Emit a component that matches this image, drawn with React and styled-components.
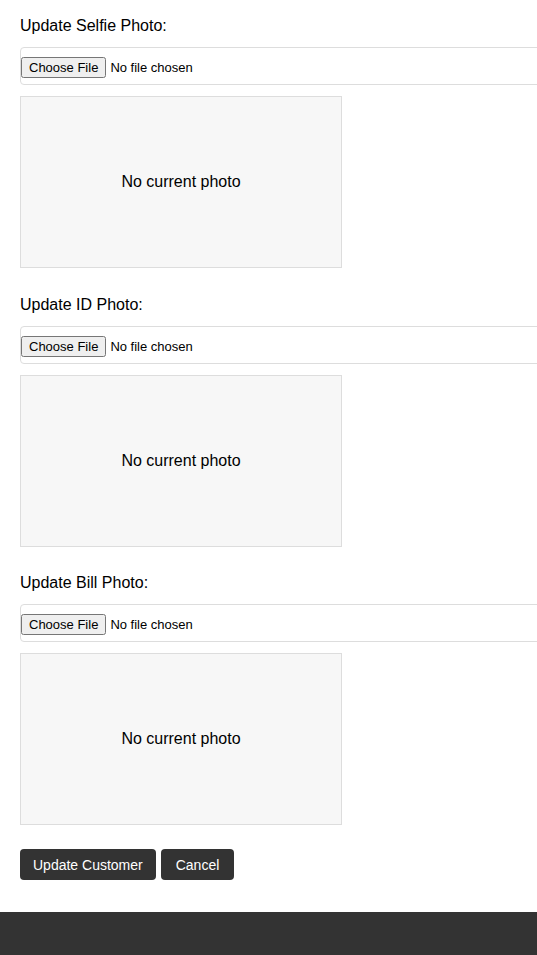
import React from 'react';
import styled, { createGlobalStyle } from 'styled-components';

const GlobalStyle = createGlobalStyle`
  html, body {
    margin: 0;
    padding: 0;
    background: #fff;
    overflow-x: hidden;
  }
  body {
    font-family: "Liberation Sans", Arial, sans-serif;
    color: #000;
  }
`;

const Page = styled.div`
  display: flex;
  flex-direction: column;
  min-height: 955px;
`;

const Form = styled.form`
  display: flex;
  flex-direction: column;
  padding: 17px 20px 32px;
`;

const Sections = styled.div`
  display: flex;
  flex-direction: column;
  gap: 27.5px;
  margin-bottom: 24px;
`;

const Section = styled.div`
  display: flex;
  flex-direction: column;
`;

const Label = styled.label`
  display: block;
  font-size: 16px;
  line-height: 18px;
  margin-bottom: 12px;
`;

const FileInput = styled.input`
  box-sizing: border-box;
  width: 560px;
  height: 38px;
  padding: 9px 0 0;
  border: 1px solid #ddd;
  border-radius: 4px;
  font-family: "Liberation Sans", Arial, sans-serif;
  font-size: 13px;
  margin-bottom: 11px;
`;

const Preview = styled.div`
  box-sizing: border-box;
  width: 322px;
  height: 172px;
  background: #f7f7f7;
  border: 1px solid #ddd;
  display: flex;
  align-items: center;
  justify-content: center;
  font-size: 16px;
`;

const Actions = styled.div`
  display: flex;
  gap: 5px;
`;

const Button = styled.button`
  height: 31px;
  padding: 0 ${p => (p.$wide ? 13 : 15)}px;
  background: #333;
  color: #fff;
  border: none;
  border-radius: 4px;
  font-family: "Liberation Sans", Arial, sans-serif;
  font-size: 14px;
  cursor: pointer;
`;

const Footer = styled.footer`
  height: 43px;
  background: #333;
`;

const photos = ['Selfie', 'ID', 'Bill'];

export default function App() {
  return (
    <Page>
      <GlobalStyle />
      <Form onSubmit={e => e.preventDefault()}>
        <Sections>
          {photos.map(name => (
            <Section key={name}>
              <Label>Update {name} Photo:</Label>
              <FileInput type="file" accept="image/*" />
              <Preview>No current photo</Preview>
            </Section>
          ))}
        </Sections>
        <Actions>
          <Button type="submit" $wide>Update Customer</Button>
          <Button type="button">Cancel</Button>
        </Actions>
      </Form>
      <Footer />
    </Page>
  );
}
